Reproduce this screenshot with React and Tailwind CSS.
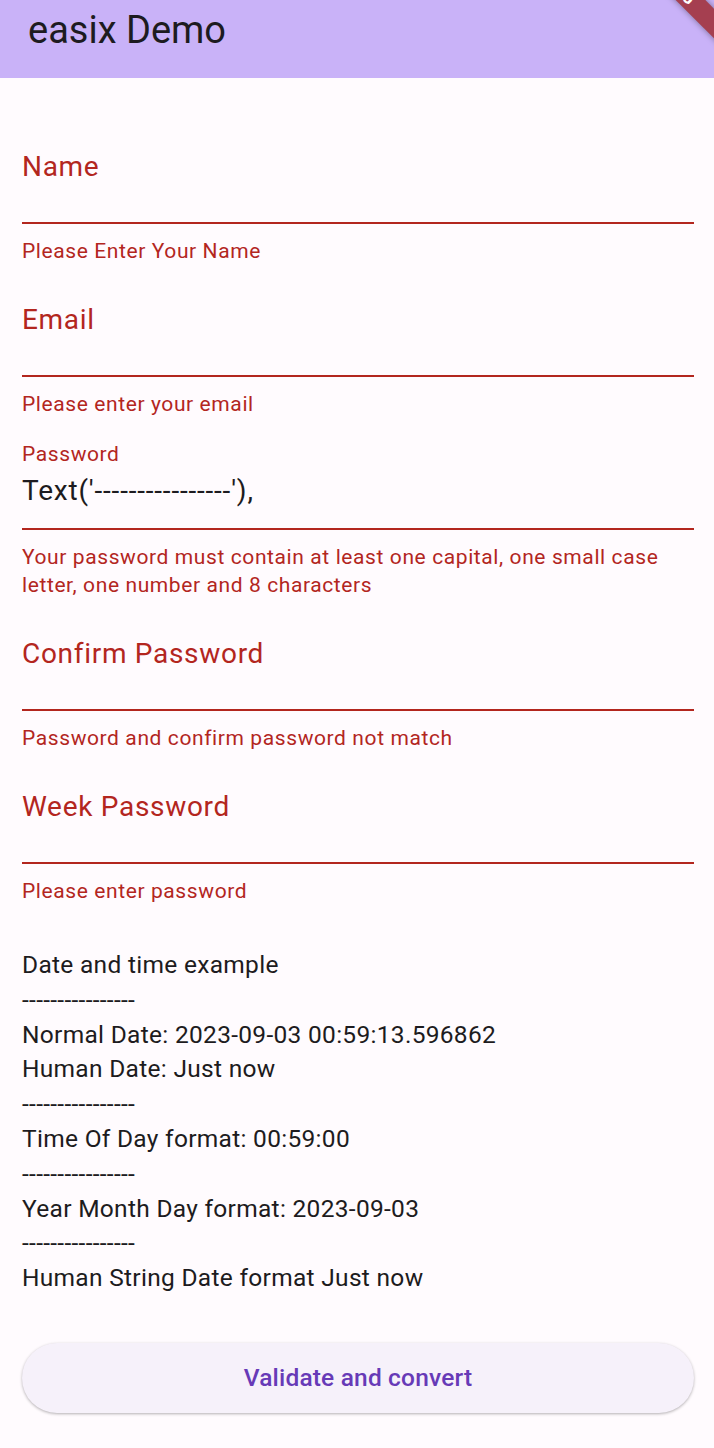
import React from "react";

const font = { fontFamily: "Roboto, 'Noto Sans', sans-serif" };

function Field({ label, error }) {
  return (
    <div>
      <div className="h-[112px] border-b-2 border-[#b3261e] pt-[39px]">
        <div className="text-[28px] leading-[32px] tracking-[0.7px] text-[#b3261e]">{label}</div>
      </div>
      <div className="mt-[13px] text-[21px] leading-[28px] tracking-[0.6px] text-[#b3261e]">
        {error}
      </div>
    </div>
  );
}

export default function App() {
  const dash = "----------------";
  const lines = [
    "Date and time example",
    dash,
    "Normal Date: 2023-09-03 00:59:13.596862",
    "Human Date: Just now",
    dash,
    "Time Of Day format: 00:59:00",
    dash,
    "Year Month Day format: 2023-09-03",
    dash,
    "Human String Date format Just now",
  ];
  return (
    <div style={font} className="min-h-screen bg-[#fffbfe] pb-[35px]">
      <div className="relative h-[78px] overflow-hidden bg-[#c9b2f8] pl-[28px] pt-[6px]">
        <div className="text-[38px] leading-[49px] text-[#1d1b20]">easix Demo</div>
        <div className="absolute left-[572px] top-[-29.5px] flex h-[21px] w-[200px] rotate-45 items-center justify-center bg-[#a53f50] text-[17px] font-bold tracking-[1px] text-white shadow-[0_0_6px_rgba(0,0,0,0.4)]">
          DEBUG
        </div>
      </div>
      <div className="pl-[22px] pr-[20px] pt-[34px]">
        <Field label="Name" error="Please Enter Your Name" />
        <Field label="Email" error="Please enter your email" />
        <div>
          <div className="h-[112px] border-b-2 border-[#b3261e] pt-[22px]">
            <div className="text-[21px] leading-[28px] tracking-[0.6px] text-[#b3261e]">Password</div>
            <div className="mt-[5px] text-[28px] leading-[36px] tracking-[0.8px] text-[#1d1b20]">
              Text('{dash}'),
            </div>
          </div>
          <div className="mt-[13px] pr-[20px] text-[21px] leading-[28px] tracking-[0.6px] text-[#b3261e]">
            Your password must contain at least one capital, one small case letter, one number and 8 characters
          </div>
        </div>
        <Field label="Confirm Password" error="Password and confirm password not match" />
        <Field label="Week Password" error="Please enter password" />
        <div className="mt-[43px] text-[24.5px] leading-[34.8px] tracking-[0.3px] text-[#1d1b20]">
          {lines.map((l, i) => (
            <div key={i}>{l}</div>
          ))}
        </div>
        <button className="mt-[47.5px] flex h-[70px] w-full items-center justify-center rounded-full bg-[#f6f1fa] text-[24.5px] font-medium tracking-[0.175px] text-[#673ab7] shadow-[0_1px_3px_rgba(0,0,0,0.3)]">
          Validate and convert
        </button>
      </div>
    </div>
  );
}
